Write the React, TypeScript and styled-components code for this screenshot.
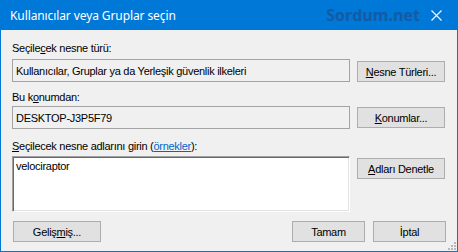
import React from "react";
import styled, { createGlobalStyle } from "styled-components";

const GlobalStyle = createGlobalStyle`
  html, body {
    margin: 0;
    padding: 0;
    background: #f0f0f0;
  }
  * {
    box-sizing: border-box;
  }
`;

const Window = styled.div`
  position: relative;
  width: 458px;
  height: 252px;
  display: flex;
  flex-direction: column;
  background: #f0f0f0;
  border: 1px solid #0078d7;
  border-top: none;
  font-family: "Liberation Sans", Arial, sans-serif;
  font-size: 11px;
  letter-spacing: -0.28px;
  color: #000;
  overflow: hidden;
`;

const TitleBar = styled.div`
  height: 30px;
  margin: 0 -1px;
  flex: none;
  display: flex;
  align-items: center;
  background: #0078d7;
  color: #fff;
  padding-left: 10px;
  letter-spacing: normal;
`;

const Title = styled.span`
  font-family: "Noto Sans", "Open Sans", sans-serif;
  font-size: 12px;
  letter-spacing: -0.1px;
`;

const Watermark = styled.span`
  margin-left: auto;
  margin-right: 1px;
  font-family: "Open Sans", "Noto Sans", sans-serif;
  font-weight: 700;
  font-size: 16px;
  color: #18579a;
  opacity: 0.85;
`;

const CloseButton = styled.div`
  width: 30px;
  height: 30px;
  margin-right: 7px;
  display: flex;
  align-items: center;
  justify-content: center;
`;

const Body = styled.div`
  flex: 1;
  display: flex;
  flex-direction: column;
  padding: 0 11px 9px 11px;
`;

const Label = styled.div<{ $top: number }>`
  margin-top: ${(p) => p.$top}px;
  line-height: 13px;
  height: 13px;
  white-space: nowrap;
`;

const Row = styled.div<{ $top: number }>`
  margin-top: ${(p) => p.$top}px;
  display: grid;
  grid-template-columns: 338px 88px;
  column-gap: 7px;
  align-items: start;
`;

const Field = styled.div`
  height: 23px;
  border: 1px solid #a3a3a3;
  background: #f0f0f0;
  padding-left: 3px;
  display: flex;
  align-items: center;
  white-space: nowrap;
  overflow: hidden;
`;

const Names = styled.div`
  height: 56px;
  background: #fff;
  border: 1px solid;
  border-color: #a0a0a0 #ffffff #ffffff #a0a0a0;
  box-shadow: inset 1px 1px 0 #696969, inset -1px -1px 0 #e3e3e3;
  padding: 3px 3px;
  line-height: 13px;
`;

const Button = styled.div<{ $width?: number; $top?: number }>`
  width: ${(p) => (p.$width ? `${p.$width}px` : "auto")};
  height: 21px;
  margin-top: ${(p) => p.$top ?? 0}px;
  background: #e1e1e1;
  border: 1px solid #adadad;
  display: flex;
  align-items: center;
  justify-content: center;
  white-space: nowrap;
`;

const Footer = styled.div`
  margin-top: auto;
  display: flex;
  align-items: center;
  padding-left: 1px;
`;

const FooterRight = styled.div`
  margin-left: auto;
  display: flex;
  gap: 8px;
`;

const U = styled.span`
  text-decoration: underline;
  text-underline-offset: 1px;
`;

const Link = styled.span`
  color: #0066cc;
  text-decoration: underline;
  text-underline-offset: 1px;
`;

const Grip = styled.svg`
  position: absolute;
  right: 1px;
  bottom: 1px;
`;

const App: React.FC = () => {
  return (
    <>
      <GlobalStyle />
      <Window>
        <TitleBar>
          <Title>Kullanıcılar veya Gruplar seçin</Title>
          <Watermark>Sordum.net</Watermark>
          <CloseButton>
            <svg width="11" height="11" viewBox="0 0 11 11">
              <path d="M0.5 0.5 L10.5 10.5 M10.5 0.5 L0.5 10.5" stroke="#fff" strokeWidth="1.1" fill="none" />
            </svg>
          </CloseButton>
        </TitleBar>
        <Body>
          <Label $top={12}>
            Seçile<U>c</U>ek nesne türü:
          </Label>
          <Row $top={4}>
            <Field>Kullanıcılar, Gruplar ya da Yerleşik güvenlik ilkeleri</Field>
            <Button $top={2}>
              <U>N</U>esne Türleri...
            </Button>
          </Row>
          <Label $top={9}>
            Bu k<U>o</U>numdan:
          </Label>
          <Row $top={2}>
            <Field>DESKTOP-J3P5F79</Field>
            <Button $top={1}>
              <U>K</U>onumlar...
            </Button>
          </Row>
          <Label $top={11}>
            <U>S</U>eçilecek nesne adlarını girin (<Link>örnekler</Link>):
          </Label>
          <Row $top={3}>
            <Names>velociraptor</Names>
            <Button $top={2}>
              <U>A</U>dları Denetle
            </Button>
          </Row>
          <Footer>
            <Button $width={88}>
              Geliş<U>m</U>iş...
            </Button>
            <FooterRight>
              <Button $width={73}>Tamam</Button>
              <Button $width={73}>İptal</Button>
            </FooterRight>
          </Footer>
        </Body>
        <Grip width="9" height="9" viewBox="0 0 9 9">
          {[
            [7, 1],
            [4, 4],
            [7, 4],
            [1, 7],
            [4, 7],
            [7, 7],
          ].map(([x, y]) => (
            <rect key={`${x}-${y}`} x={x} y={y} width="2" height="2" fill="#b8b8b8" />
          ))}
        </Grip>
      </Window>
    </>
  );
};

export default App;
